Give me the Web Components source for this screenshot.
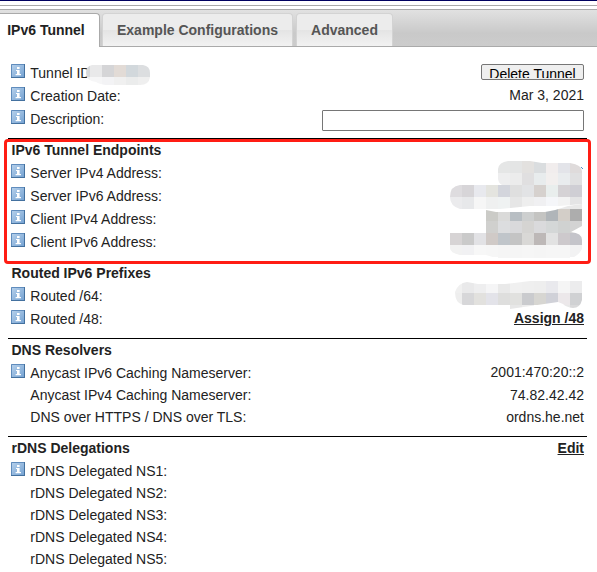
<!DOCTYPE html>
<html lang="en">
<head>
<meta charset="utf-8">
<title>Tunnel Details</title>
<style>
html,body{margin:0;height:100%;overflow:hidden;background:#fff}
body{font:14px "Liberation Sans",Arial,sans-serif;color:#222}
</style>
</head>
<body>
<tunnel-page></tunnel-page>
<script>
const define=(name,html,setup)=>customElements.define(name,class extends HTMLElement{
  connectedCallback(){
    if(this.shadowRoot)return;
    const t=document.createElement('template');
    t.innerHTML=html;
    this.attachShadow({mode:'open'}).append(t.content.cloneNode(true));
    if(setup)setup(this,this.shadowRoot);
  }
});

define('info-icon',`<style>:host{display:block;width:14px;height:14px}svg{display:block}</style>
<svg width="14" height="14" viewBox="0 0 14 14"><defs><linearGradient id="g" x1="0" y1="0" x2="1" y2="1"><stop offset="0" stop-color="#b4cfea"/><stop offset="1" stop-color="#76a3d3"/></linearGradient></defs>
<rect width="14" height="14" rx=".6" fill="#5f8cbd"/><path d="M0 13h14v1H0zM13 0h1v14h-1z" fill="#44719f"/><rect x="1" y="1" width="12" height="12" fill="url(#g)"/>
<path d="M6 3h2.6v2H6zM5 6h3.6v4H10v1.2H4.6V10H6V7H5z" fill="#fff"/></svg>`);

define('tab-item',`<style>
:host{display:flex;box-sizing:border-box;height:33px;padding:0 14px;align-items:center;justify-content:center;border:1px solid #d3d3d3;border-bottom:0;border-radius:4px 4px 0 0;background:linear-gradient(#ececec 0 50%,#e4e4e4 50%,#f2f2f2);color:#555;font-weight:bold;white-space:nowrap}
:host([active]){height:34px;margin-bottom:-1px;background:#fff;color:#222;border-color:#aaa;border-left:0;border-top-left-radius:0;padding:0 7px 1px 0}
</style><slot></slot>`);

define('tab-bar',`<style>
:host{display:flex;box-sizing:border-box;height:38px;align-items:flex-end;border-top:1px solid #aaa;border-bottom:1px solid #aaa;background:linear-gradient(#e1e1e1,#c9c9c9 65%,#ccc)}
</style><slot></slot>`);

define('info-row',`<style>
:host{display:flex;height:22px;padding:0 3px;align-items:flex-start;line-height:22px;white-space:nowrap}
:host([icon]){height:23px;line-height:24px}
info-icon{margin-top:3px}
.i{width:19.3px;flex:none}
.v{margin-left:auto;line-height:22px}
</style><div class="i"></div><span class="l"><slot></slot></span><div class="v"><slot name="value"></slot></div>`,
(h,r)=>{if(h.hasAttribute('icon'))r.querySelector('.i').append(document.createElement('info-icon'))});

define('info-section',`<style>
:host{display:block;padding-bottom:8px}
:host([heading]){border-top:1px solid #000}
header{display:flex;justify-content:space-between;height:22px;line-height:22px;padding:0 3px 0 3.5px;font-weight:bold}
</style><slot></slot>`,
(h,r)=>{if(h.hasAttribute('heading')){
  const e=document.createElement('header');
  e.innerHTML='<span></span><slot name="action"></slot>';
  e.firstChild.textContent=h.getAttribute('heading');
  r.querySelector('slot').before(e);
}});

define('action-link',`<style>:host{display:inline;font-weight:bold;text-decoration:underline}</style><slot></slot>`);

define('small-button',`<style>
:host{display:block;box-sizing:border-box;width:103px;height:16px;margin-top:3px;overflow:hidden;border:1px solid #767676;border-radius:2px;background:#efefef;color:#000;text-align:center}
div{height:13px;overflow:hidden;line-height:18px}
</style><div><slot></slot></div>`);

define('text-field',`<style>:host{display:block}input{display:block;box-sizing:border-box;width:262px;height:21px;margin:3px 0 0;padding:0 2px;border:1px solid #767676;border-radius:1px;background:#fff;font:inherit}</style><input aria-label="Description">`);

/* Pixelated patches hiding private values: 12px cells cut to a brushed outline */
const cells=(x,y,rows)=>rows.map((row,j)=>row.split(' ').map((c,i)=>c==='-'?'':`<rect x="${x+i*12}" y="${y+j*12}" width="12" height="12" fill="#${c}"/>`).join('')).join('');
define('pixel-masks',`<style>:host{position:absolute;inset:0;pointer-events:none}svg{display:block}</style>
<svg width="597" height="572" shape-rendering="crispEdges">
<clipPath id="a"><path d="M92 65H143Q150 66 150 73V77Q149 85 140 85H106Q99 84 96 82Q86 81 86 73Q86 66 92 65Z"/></clipPath>
<clipPath id="b"><path d="M498 169Q499 162 508 161H530L542 163H570Q582 165 582 171V204L559 206L530 206L500 209H460Q450 206 450 197Q450 186 460 185H502Q498 183 498 178Z"/></clipPath>
<clipPath id="c"><path d="M486 210L496 212H545Q557 210 568 206L582 204V226L571 232Q582 233 582 240V249Q578 257 570 258H496L486 255H460Q450 253 450 248V233H486Z"/></clipPath>
<clipPath id="d"><path d="M455 292Q458 283 467 282L478 284H505L530 281H582V300Q580 308 573 308Q566 307 563 304L558 302L510 309V305H463Q455 303 455 292Z"/></clipPath>
<g clip-path="url(#a)">${cells(78,65,['d6d8da e9e9ea d5d5d7 e2dbd6 d2d8dc dcdee0','efefef f6f6f7 f3f3f5 f0f0f0 ebecec efefef'])}</g>
<g clip-path="url(#b)">${cells(450,161,['- - - - e5e6e6 e4e5e5 e3e1df dadddf f1eded e3e4e9 dfdbdb','- - - - eeeeef ececec e0dfe0 e8eced f2efee e9ecee e0e0e1','dedcdf d7d5d8 e8e9ee e4e4df d3d5dc dfdfdf e2e3e5 d6d1ce e9eeed d5d2d5 cfced4','ebebed e7e8ea f6f6f6 eff0f0 eff2f2 e6e6e6 eeeeee f0f0f2 f5f6f9 f3f3f3 e4e4e5'])}</g>
<g clip-path="url(#c)">${cells(450,197,['- - - - - - - - - e9e9e9 e9e9e9','- - - cbcbc7 dadad9 b8bec3 cdcfcf c4c4c2 b0b5b9 d3cec8 adadad','- - - d0d0ce dcdddf d9d9db d5d4d2 dadadc d4d7d7 d0d2d1 d3d3d3','d7d4d5 cacaca e2e2e5 d0cac7 c0c5ca c4c4c4 d9d8d6 bdb8b7 e2e2e2 cdc9cc c4c4ca','f2f2f2 f1f1f3 f7f7f7 f6f6f6 f5f5f5 f5f5f5 f6f6f6 f5f5f5 f6f6f6 f6f6f6 f2f2f3','- - - - f5f5f5 f5f5f5 f6f6f6 f5f5f5 f6f6f6 f6f6f6 -'])}</g>
<g clip-path="url(#d)">${cells(450,281,['f0f0f0 e9e9ea eeeeef f5f5f6 e9e9e9 f0f0f0 efefef eeeeee e9e9ed f5f5f5 ececed','eeeeee d7d7d9 e2e1de e3e3e9 dededd e1e1df cacbce d7d6d2 d0d1d8 ece8ea d0d1d3','- - - - - e7e7e7 ececec - - e8e8e8 d9d9da'])}</g>
<path fill="#4a8fc8" d="M581 167h1v1h-1zM582 168h1v1h-1z"/>
</svg>`);

define('highlight-frame',`<style>:host{position:absolute;left:4px;top:139px;box-sizing:border-box;width:587px;height:125px;border:3px solid #ff1d14;border-radius:4px}</style>`);

define('tunnel-page',`<style>
:host{display:block;position:relative;width:597px;height:572px;overflow:hidden}
.top{height:4px;border-top:1px solid #00005f;border-bottom:1px solid #aaa;margin-bottom:3px}
.t1{width:100px}.t2{width:191px;margin-left:2px}.t3{width:97px;margin-left:3px}
main{padding:14px 10px 0 8px}
</style>
<div class="top"></div>
<tab-bar><tab-item class="t1" active>IPv6 Tunnel</tab-item><tab-item class="t2">Example Configurations</tab-item><tab-item class="t3">Advanced</tab-item></tab-bar>
<main>
<info-section>
<info-row icon>Tunnel ID:<small-button slot="value">Delete Tunnel</small-button></info-row>
<info-row icon>Creation Date:<span slot="value">Mar 3, 2021</span></info-row>
<info-row icon>Description:<text-field slot="value"></text-field></info-row>
</info-section>
<info-section heading="IPv6 Tunnel Endpoints">
<info-row icon>Server IPv4 Address:</info-row>
<info-row icon>Server IPv6 Address:</info-row>
<info-row icon>Client IPv4 Address:</info-row>
<info-row icon>Client IPv6 Address:</info-row>
</info-section>
<info-section heading="Routed IPv6 Prefixes">
<info-row icon>Routed /64:</info-row>
<info-row icon>Routed /48:<action-link slot="value">Assign /48</action-link></info-row>
</info-section>
<info-section heading="DNS Resolvers">
<info-row icon>Anycast IPv6 Caching Nameserver:<span slot="value">2001:470:20::2</span></info-row>
<info-row>Anycast IPv4 Caching Nameserver:<span slot="value">74.82.42.42</span></info-row>
<info-row>DNS over HTTPS / DNS over TLS:<span slot="value">ordns.he.net</span></info-row>
</info-section>
<info-section heading="rDNS Delegations"><action-link slot="action">Edit</action-link>
<info-row icon>rDNS Delegated NS1:</info-row>
<info-row>rDNS Delegated NS2:</info-row>
<info-row>rDNS Delegated NS3:</info-row>
<info-row>rDNS Delegated NS4:</info-row>
<info-row>rDNS Delegated NS5:</info-row>
</info-section>
</main>
<pixel-masks></pixel-masks>
<highlight-frame></highlight-frame>`);
</script>
</body>
</html>
